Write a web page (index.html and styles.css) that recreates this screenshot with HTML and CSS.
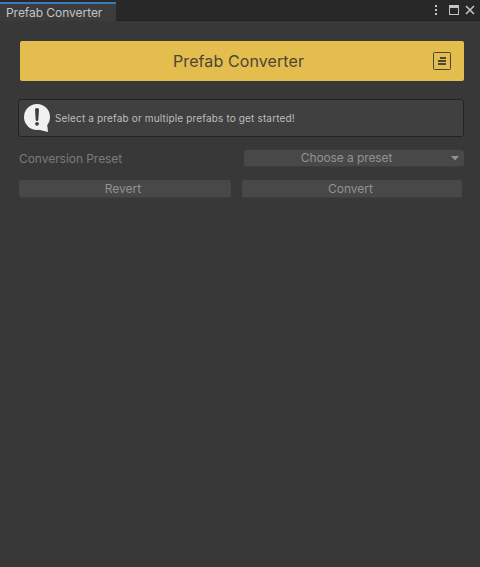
FILE: index.html
```html
<!DOCTYPE html>
<html lang="en">
<head>
<meta charset="utf-8">
<title>Prefab Converter</title>
<link rel="stylesheet" href="styles.css">
</head>
<body>
<header class="titlebar">
  <div class="tab"><span class="tab-label">Prefab Converter</span></div>
  <svg class="window-controls" width="50" height="20" viewBox="0 0 50 20">
    <path fill="#c4c4c4" d="M5 5h2v2H5zM5 9h2v2H5zM5 13h2v2H5zM19 5h10v10H19zM20 8v6h8V8z" fill-rule="evenodd"/>
    <path d="M36 6l8 8M44 6l-8 8" fill="none" stroke="#c4c4c4" stroke-width="1.6"/>
  </svg>
</header>
<main class="content">
  <div class="banner">
    <h1 class="banner-title">Prefab Converter</h1>
    <button class="banner-button" aria-label="Documentation">
      <svg width="18" height="18" viewBox="0 0 18 18">
        <rect x=".5" y=".5" width="17" height="17" rx="1" fill="none" stroke="#4b4636"/>
        <path fill="#4b4636" d="M7 5h6v2H7zM5 8h8v2H5zM5 11h8v2H5z"/>
      </svg>
    </button>
  </div>
  <div class="help">
    <svg class="help-icon" width="28" height="30" viewBox="0 0 28 30">
      <circle cx="14" cy="14" r="13" fill="#f0f0f0"/>
      <path fill="#f0f0f0" d="M15 26.500L25 29l-1-9z"/>
      <path fill="#3c3c3c" d="M12 6.500q0-1.500 2-1.500t2 1.500l-.7 10.500q-.1 1-1.300 1t-1.300-1z"/>
      <circle cx="14" cy="20.800" r="1.900" fill="#3c3c3c"/>
    </svg>
    <span class="help-text">Select a prefab or multiple prefabs to get started!</span>
  </div>
  <div class="field">
    <span class="field-label">Conversion Preset</span>
    <button class="control dropdown"><span class="dropdown-label">Choose a preset</span>
      <svg class="arrow" width="8" height="5" viewBox="0 0 8 5"><path fill="#929292" d="M0 0h8L4 4.500z"/></svg>
    </button>
  </div>
  <div class="actions">
    <button class="control revert"><span class="revert-label">Revert</span></button>
    <button class="control convert"><span class="convert-label">Convert</span></button>
  </div>
</main>
</body>
</html>
```
FILE: styles.css
```css
* { box-sizing: border-box; }
html { height: 100%; background: #383838; }
body {
  margin: 0;
  height: 100%;
  font: 12px/16px Inter, sans-serif;
  color: #c4c4c4;
}
button { font: inherit; border: 0; padding: 0; }
span, h1 { white-space: nowrap; }
.titlebar {
  display: flex;
  justify-content: space-between;
  height: 21px;
  background: #282828;
  border-bottom: 1px solid #232323;
}
.tab {
  width: 116px;
  height: 19px;
  margin-top: 2px;
  margin-bottom: -1px;
  padding: 1px 0 0 6px;
  background: #3c3c3c;
  border-top: 2px solid #3a79bb;
}
.tab-label { display: block; letter-spacing: -.05px; }
.content { padding: 20px 16px 0 18px; }
.banner {
  display: flex;
  align-items: center;
  height: 40px;
  margin-left: 2px;
  padding-right: 13px;
  background: #e3bd4e;
  border-radius: 2px;
}
.banner-title {
  flex: 1;
  margin: 0 0 0 24px;
  text-align: center;
  font-size: 16px;
  font-weight: 400;
  line-height: 20px;
  letter-spacing: .1px;
  color: #4b4636;
}
.banner-button { display: flex; background: none; }
.help {
  display: flex;
  align-items: center;
  height: 38px;
  margin-top: 18px;
  padding-left: 4px;
  background: #404040;
  border: 1px solid #232323;
  border-radius: 3px;
}
.help-icon { flex: none; }
.help-text { margin-left: 4px; font-size: 10px; letter-spacing: .15px; color: #bdbdbd; }
.field {
  display: flex;
  align-items: center;
  justify-content: space-between;
  margin-top: 13px;
  padding-left: 1px;
}
.field-label { color: #7b7b7b; letter-spacing: -.05px; }
.control {
  display: flex;
  align-items: center;
  justify-content: center;
  height: 17px;
  background: #484848;
  color: #929292;
  border-radius: 3px;
  border-bottom: 1px solid #3e3e3e;
}
.dropdown { width: 220px; padding: 0 5px 0 0; }
.dropdown-label { flex: 1; text-align: center; letter-spacing: -.1px; }
.arrow { margin-left: 2px; }
.actions {
  display: flex;
  gap: 11px;
  margin-top: 13px;
  padding-left: 1px;
}
.revert { width: 212px; height: 18px; padding-right: 4px; }
.convert { width: 220px; height: 18px; padding-right: 3px; }
```
